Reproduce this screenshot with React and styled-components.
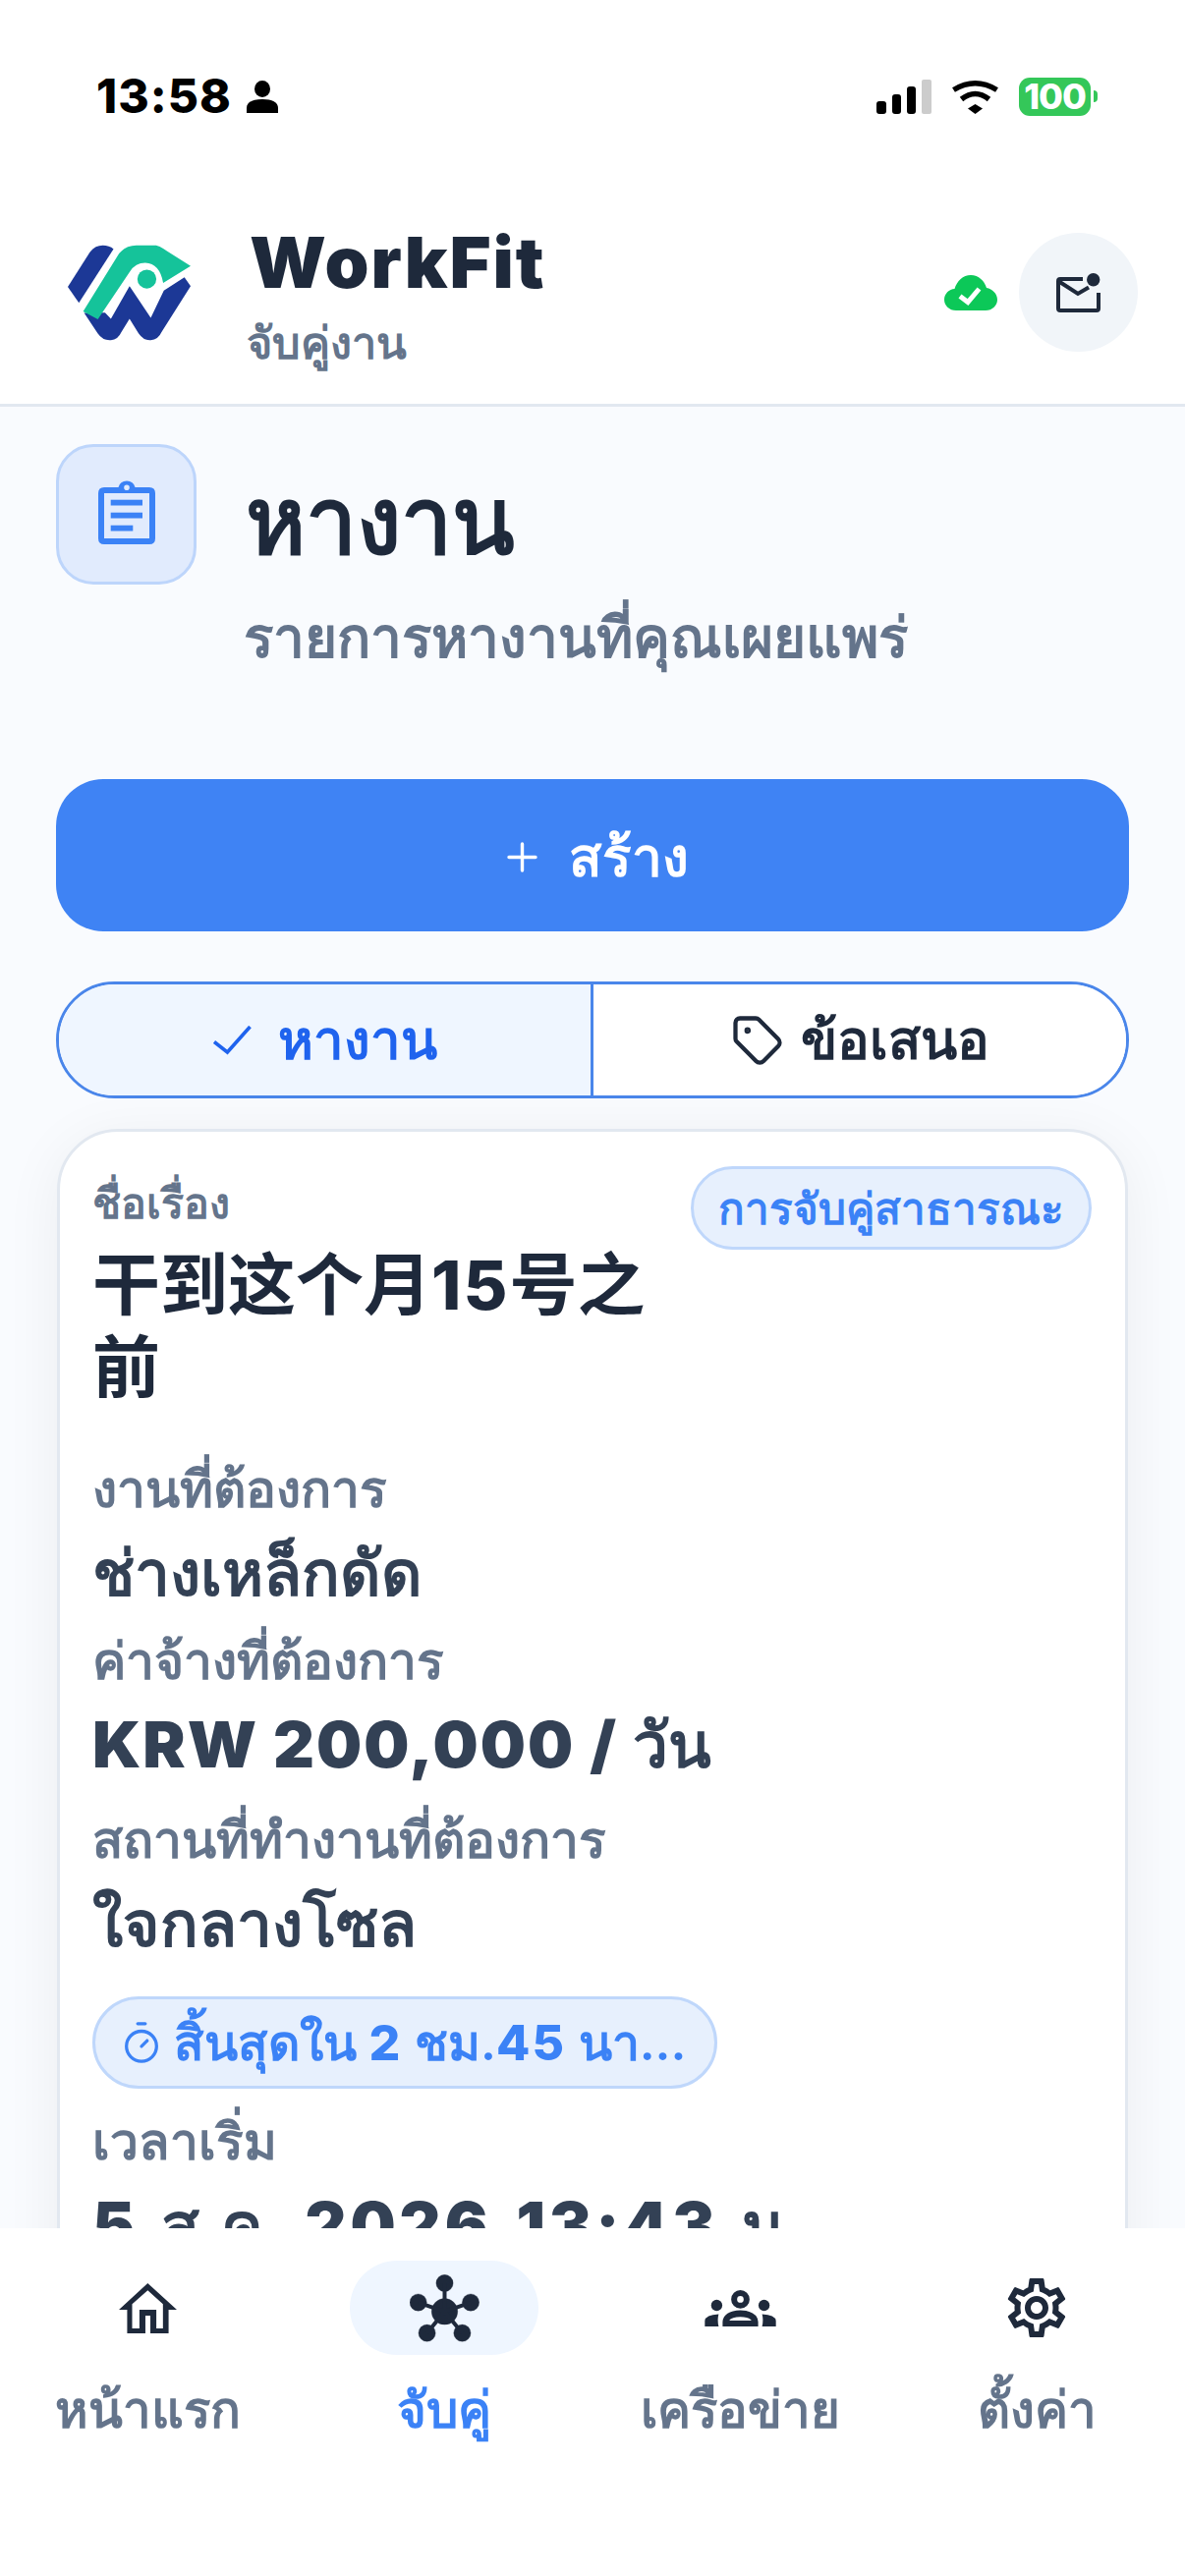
import { createGlobalStyle, styled } from "styled-components";
import { Tag, Timer } from "lucide-react";
import { MdOutlineSettings } from "react-icons/md";

const GlobalStyle = createGlobalStyle`
  body {
    margin: 0;
    font-family: Inter, "Noto Sans", "Noto Sans CJK SC", sans-serif;
  }
`;

const Screen = styled.div`
  width: 1206px;
  height: 2622px;
  display: flex;
  flex-direction: column;
  overflow: hidden;
  background: #f9fbfe;
`;

const TopBar = styled.header`
  background: #fff;
  border-bottom: 3px solid #e2e8f0;
  flex: none;
`;

const StatusBar = styled.div`
  height: 190px;
  box-sizing: border-box;
  padding: 78px 89px 0 98px;
  display: flex;
  align-items: flex-start;
  justify-content: space-between;
`;

const StatusLeft = styled.div`
  display: flex;
  align-items: center;
  gap: 15px;
  height: 40px;
`;

const Clock = styled.span`
  font-size: 48px;
  font-weight: 800;
  letter-spacing: 1px;
  line-height: 40px;
  color: #000;
`;

const StatusRight = styled.div`
  display: flex;
  align-items: center;
  gap: 20px;
  height: 40px;
  margin-right: 7px;
`;

const Battery = styled.div`
  position: relative;
  width: 73px;
  height: 39px;
  border-radius: 11px;
  background: #34c759;
  color: #fff;
  font-size: 36px;
  font-weight: 800;
  line-height: 39px;
  text-align: center;
  letter-spacing: -1px;
  &::after {
    content: "";
    position: absolute;
    right: -7px;
    top: 13px;
    width: 4px;
    height: 12px;
    border-radius: 0 6px 6px 0;
    background: #34c759;
  }
`;

const AppBar = styled.div`
  height: 221px;
  box-sizing: border-box;
  display: flex;
  align-items: center;
  padding: 0 48px 6px 68px;
`;

const Brand = styled.div`
  display: flex;
  flex-direction: column;
  margin: 7px 0 0 59px;
`;

const BrandName = styled.div`
  font-size: 72px;
  font-weight: 900;
  letter-spacing: 2px;
  line-height: 84px;
  color: #1e293b;
`;

const BrandSub = styled.div`
  margin-top: 12px;
  margin-left: -3px;
  font-size: 45px;
  font-weight: 600;
  line-height: 56px;
  color: #64748b;
`;

const AppActions = styled.div`
  margin-left: auto;
  display: flex;
  align-items: center;
  gap: 22px;
`;

const RoundButton = styled.div`
  width: 121px;
  height: 121px;
  border-radius: 50%;
  background: #f1f5f9;
  display: flex;
  align-items: center;
  justify-content: center;
`;

const Main = styled.main`
  flex: 1;
  min-height: 0;
  overflow: hidden;
  padding: 38px 57px 0;
`;

const PageHead = styled.div`
  display: flex;
  gap: 50px;
`;

const HeadIcon = styled.div`
  flex: none;
  width: 143px;
  height: 143px;
  box-sizing: border-box;
  padding-bottom: 5px;
  border-radius: 38px;
  background: #e1ebfd;
  border: 3px solid #bdd5fb;
  display: flex;
  align-items: center;
  justify-content: center;
`;

const PageTitle = styled.h1`
  margin: 22px 0 0;
  font-size: 93px;
  font-weight: 700;
  line-height: 110px;
  color: #1e293b;
`;

const PageSub = styled.p`
  margin: 29px 0 0 -2px;
  font-size: 56.7px;
  font-weight: 600;
  line-height: 72px;
  color: #64748b;
`;

const CreateButton = styled.div`
  margin-top: 108px;
  height: 155px;
  box-sizing: border-box;
  padding: 3px 0 0 10px;
  border-radius: 48px;
  background: #3f83f4;
  color: #fff;
  display: flex;
  align-items: center;
  justify-content: center;
  gap: 32px;
  font-size: 55px;
  font-weight: 600;
`;

const Tabs = styled.div`
  margin-top: 51px;
  height: 119px;
  box-sizing: border-box;
  border: 3px solid #4a86ea;
  border-radius: 60px;
  overflow: hidden;
  display: grid;
  grid-template-columns: 544px 1fr;
`;

const TabItem = styled.div`
  display: flex;
  align-items: center;
  justify-content: center;
  gap: ${(p) => (p.$active ? "27px" : "17px")};
  font-size: 54.5px;
  font-weight: 700;
  color: ${(p) => (p.$active ? "#1f63ee" : "#1e293b")};
  background: ${(p) => (p.$active ? "#eff6ff" : "#fff")};
  border-right: ${(p) => (p.$active ? "3px solid #4a86ea" : "none")};
`;

const Card = styled.section`
  margin: 31px 1px 0;
  padding: 35px 34px 60px 33px;
  background: #fff;
  border: 3px solid #e2e8f0;
  border-radius: 62px;
  box-shadow: 0 10px 60px rgba(15, 23, 42, 0.06);
`;

const CardTop = styled.div`
  display: flex;
  justify-content: space-between;
  align-items: flex-start;
  gap: 40px;
  margin-bottom: 44px;
`;

const TitleCol = styled.div`
  flex: 1;
  min-width: 0;
`;

const TitleLabel = styled.div`
  margin-top: 7px;
  font-size: 43px;
  font-weight: 600;
  line-height: 60px;
  color: #64748b;
`;

const CardTitle = styled.div`
  margin-top: 12px;
  font-size: 69px;
  font-weight: 700;
  line-height: 84px;
  color: #1e293b;
`;

const FieldLabel = styled.div`
  font-size: 51.5px;
  font-weight: 600;
  line-height: 74px;
  color: #64748b;
  white-space: nowrap;
`;

const FieldValue = styled.div`
  margin: 3px 0 ${(p) => p.$after || 0}px;
  font-size: 64px;
  font-weight: 700;
  line-height: 92px;
  color: #334155;
  white-space: nowrap;
`;

const DateValue = styled(FieldValue)`
  word-spacing: 8px;
`;

const Latin = styled.span`
  font-weight: 800;
  letter-spacing: ${(p) => p.$spacing || 2}px;
`;

const HeavyLatin = styled(Latin)`
  font-size: 65px;
  font-weight: 900;
`;

const Pill = styled.div`
  flex: none;
  height: 85px;
  box-sizing: border-box;
  padding: 0 25px;
  border-radius: 43px;
  background: #e7f0fd;
  border: 3px solid #bfd7fb;
  color: #3b82f6;
  font-size: 44px;
  font-weight: 600;
  display: flex;
  align-items: center;
  white-space: nowrap;
`;

const TimerPill = styled(Pill)`
  width: 636px;
  height: 94px;
  border-radius: 47px;
  margin: 28px 0 16px;
  padding: 0 0 0 24px;
  gap: 10px;
  font-size: 50px;
`;

const BottomNav = styled.nav`
  flex: none;
  height: 354px;
  background: #fff;
  display: grid;
  grid-template-columns: repeat(4, 1fr);
`;

const NavItem = styled.div`
  display: flex;
  flex-direction: column;
  align-items: center;
  padding-top: 33px;
`;

const NavIcon = styled.div`
  width: 192px;
  height: 96px;
  border-radius: 48px;
  background: ${(p) => (p.$active ? "#eff6ff" : "transparent")};
  display: flex;
  align-items: center;
  justify-content: center;
  color: #1e293b;
`;

const NavLabel = styled.div`
  margin-top: 24px;
  font-size: 51px;
  font-weight: 600;
  line-height: 64px;
  white-space: nowrap;
  color: ${(p) => (p.$active ? "#3b82f6" : "#64748b")};
`;

const PersonIcon = () => (
  <svg width="32" height="33" viewBox="0 0 32 33" fill="#000">
    <ellipse cx="16" cy="8.5" rx="8" ry="8.5" />
    <path d="M0 33V28C0 22 6 19 16 19C26 19 32 22 32 28V33Z" />
  </svg>
);

const SignalIcon = () => (
  <svg width="56" height="35" viewBox="0 0 56 35">
    <rect x="0" y="22" width="10" height="13" rx="3" fill="#000" />
    <rect x="16" y="15" width="9" height="20" rx="3" fill="#000" />
    <rect x="31" y="7" width="9" height="28" rx="3" fill="#000" />
    <rect x="46" y="0" width="10" height="35" rx="2" fill="#ccc" />
  </svg>
);

const WifiIcon = () => (
  <svg width="49" height="35" viewBox="0 0 49 35" fill="none">
    <path d="M2.5 10.5Q24.5 -3 46.5 10.5" stroke="#000" strokeWidth="5.5" />
    <path d="M10.5 20Q24.5 9 38.5 20" stroke="#000" strokeWidth="5.5" />
    <path d="M17 29.5L24.5 25L32 29.5L24.5 35Z" fill="#000" />
  </svg>
);

const Logo = () => (
  <svg width="127" height="100" viewBox="55 85 382 300">
    <path d="M58 217L125 112Q140 90 165 90Q185 90 198 101L92 266Z" fill="#1c3896" />
    <path
      d="M108 297L150 360Q165 382 190 380Q212 378 222 355L247 315L275 360Q290 382 312 380Q335 378 345 355L434 215L415 188L352 228L312 312L247 215L190 315L172 296Z"
      fill="#1c3896"
    />
    <path
      d="M105 292L215 115Q235 90 268 90L328 90Q340 92 350 100L434 153L350 205Q340 145 295 143Q265 143 248 170L150 316Z"
      fill="#15c39a"
    />
    <circle cx="300" cy="193" r="29" fill="#15c39a" />
  </svg>
);

const CloudDone = () => (
  <svg width="54" height="36" viewBox="0 0 54 36">
    <path
      d="M12 36C5 36 0 31 0 25C0 19 5 14 10.5 14C13 6 19 0 27 0C35 0 41 6 43 13C49 14 54 19 54 25C54 31 49 36 42 36Z"
      fill="#0cc858"
    />
    <path d="M16 21.5L24 27.5L35.5 14" fill="none" stroke="#fff" strokeWidth="5" />
  </svg>
);

const MailIcon = () => (
  <svg width="45" height="40" viewBox="0 0 45 40" fill="none">
    <path
      d="M27 6H4Q2 6 2 8V36Q2 38 4 38H41Q43 38 43 36V20"
      stroke="#1e293b"
      strokeWidth="4"
    />
    <path d="M2 8L22 21L33 14.5" stroke="#1e293b" strokeWidth="4" />
    <circle cx="37.7" cy="6.7" r="6.7" fill="#1e293b" />
  </svg>
);

const ClipboardIcon = () => (
  <svg width="58" height="65" viewBox="0 0 58 65" fill="#3b82f6">
    <path
      fillRule="evenodd"
      d="M20.5 7A8.8 8.8 0 0 1 37.5 7H52Q58 7 58 13V59Q58 65 52 65H6Q0 65 0 59V13Q0 7 6 7ZM6 13V59H52V13ZM29 4.5A2.8 2.8 0 1 0 29 10.1A2.8 2.8 0 1 0 29 4.5Z"
    />
    <rect x="12.7" y="19.7" width="32.3" height="5.8" />
    <rect x="12.7" y="32.7" width="32.3" height="5.8" />
    <rect x="12.7" y="45.7" width="22.6" height="5.8" />
  </svg>
);

const PlusIcon = () => (
  <svg width="31" height="31" viewBox="0 0 31 31" stroke="#fff" strokeWidth="3.4" strokeLinecap="round">
    <path d="M15.5 2V29M2 15.5H29" />
  </svg>
);

const CheckIcon = () => (
  <svg width="39" height="30" viewBox="0 0 39 30" fill="none" stroke="#1f63ee" strokeWidth="3.6">
    <path d="M1 16.5L14.4 27L37.5 1" />
  </svg>
);

const HomeIcon = () => (
  <svg width="59" height="51" viewBox="125 97 175 151" fill="currentColor">
    <path
      fillRule="evenodd"
      d="M125 177L212 97L300 177H275V248H220V195H205V248H150V177ZM165 233H187V177H238V233H258V160L212 118L165 160Z"
    />
  </svg>
);

const HubIcon = () => (
  <svg width="71" height="69" viewBox="1010 69 214 206" fill="currentColor" stroke="currentColor">
    <circle cx="1117" cy="182" r="40" />
    <circle cx="1117" cy="95" r="26" />
    <circle cx="1036" cy="154" r="26" />
    <circle cx="1197" cy="154" r="26" />
    <circle cx="1063" cy="248" r="26" />
    <circle cx="1171" cy="248" r="26" />
    <path
      strokeWidth="12"
      d="M1117 182L1117 95M1117 182L1036 154M1117 182L1197 154M1117 182L1063 248M1117 182L1171 248"
    />
  </svg>
);

const GroupsIcon = () => (
  <svg width="73" height="37" viewBox="112 122 218 110" fill="currentColor">
    <path
      fillRule="evenodd"
      d="M221 122A28 28 0 1 0 221 178A28 28 0 1 0 221 122ZM221 140A10 10 0 1 1 221 160A10 10 0 1 1 221 140Z"
    />
    <circle cx="149" cy="168" r="17" />
    <circle cx="293" cy="168" r="17" />
    <path
      fillRule="evenodd"
      d="M167 232V218Q170 185 221 183Q272 185 275 218V232ZM187 214H255Q247 203 221 203Q195 203 187 214Z"
    />
    <path d="M113 232V215Q115 197 155 195Q150 212 155 232Z" />
    <path d="M329 232V215Q327 197 287 195Q292 212 287 232Z" />
  </svg>
);

const App = () => {
  return (
    <Screen>
      <GlobalStyle />
      <TopBar>
        <StatusBar>
          <StatusLeft>
            <Clock>13:58</Clock>
            <PersonIcon />
          </StatusLeft>
          <StatusRight>
            <SignalIcon />
            <WifiIcon />
            <Battery>100</Battery>
          </StatusRight>
        </StatusBar>
        <AppBar>
          <Logo />
          <Brand>
            <BrandName>WorkFit</BrandName>
            <BrandSub>จับคู่งาน</BrandSub>
          </Brand>
          <AppActions>
            <CloudDone />
            <RoundButton>
              <MailIcon />
            </RoundButton>
          </AppActions>
        </AppBar>
      </TopBar>

      <Main>
        <PageHead>
          <HeadIcon>
            <ClipboardIcon />
          </HeadIcon>
          <div>
            <PageTitle>หางาน</PageTitle>
            <PageSub>รายการหางานที่คุณเผยแพร่</PageSub>
          </div>
        </PageHead>

        <CreateButton>
          <PlusIcon />
          สร้าง
        </CreateButton>

        <Tabs>
          <TabItem $active>
            <CheckIcon />
            หางาน
          </TabItem>
          <TabItem>
            <Tag size={54} strokeWidth={1.9} />
            ข้อเสนอ
          </TabItem>
        </Tabs>

        <Card>
          <CardTop>
            <TitleCol>
              <TitleLabel>ชื่อเรื่อง</TitleLabel>
              <CardTitle>
                干到这个月<Latin>15</Latin>号之前
              </CardTitle>
            </TitleCol>
            <Pill>การจับคู่สาธารณะ</Pill>
          </CardTop>
          <FieldLabel>งานที่ต้องการ</FieldLabel>
          <FieldValue $after={6}>ช่างเหล็กดัด</FieldValue>
          <FieldLabel>ค่าจ้างที่ต้องการ</FieldLabel>
          <FieldValue $after={13}>
            <HeavyLatin $spacing={2}>KRW 200,000 /</HeavyLatin> วัน
          </FieldValue>
          <FieldLabel>สถานที่ทำงานที่ต้องการ</FieldLabel>
          <FieldValue>ใจกลางโซล</FieldValue>
          <TimerPill>
            <Timer size={46} strokeWidth={1.7} />
            <span>
              สิ้นสุดใน <Latin>2</Latin> ชม.<Latin>45</Latin> นา...
            </span>
          </TimerPill>
          <FieldLabel>เวลาเริ่ม</FieldLabel>
          <DateValue>
            <HeavyLatin $spacing={4}>5</HeavyLatin> ส.ค.{" "}
            <HeavyLatin $spacing={4}>2026 13:43</HeavyLatin> น.
          </DateValue>
        </Card>
      </Main>

      <BottomNav>
        <NavItem>
          <NavIcon>
            <HomeIcon />
          </NavIcon>
          <NavLabel>หน้าแรก</NavLabel>
        </NavItem>
        <NavItem>
          <NavIcon $active>
            <HubIcon />
          </NavIcon>
          <NavLabel $active>จับคู่</NavLabel>
        </NavItem>
        <NavItem>
          <NavIcon>
            <GroupsIcon />
          </NavIcon>
          <NavLabel>เครือข่าย</NavLabel>
        </NavItem>
        <NavItem>
          <NavIcon>
            <MdOutlineSettings size={72} />
          </NavIcon>
          <NavLabel>ตั้งค่า</NavLabel>
        </NavItem>
      </BottomNav>
    </Screen>
  );
};

export default App;
